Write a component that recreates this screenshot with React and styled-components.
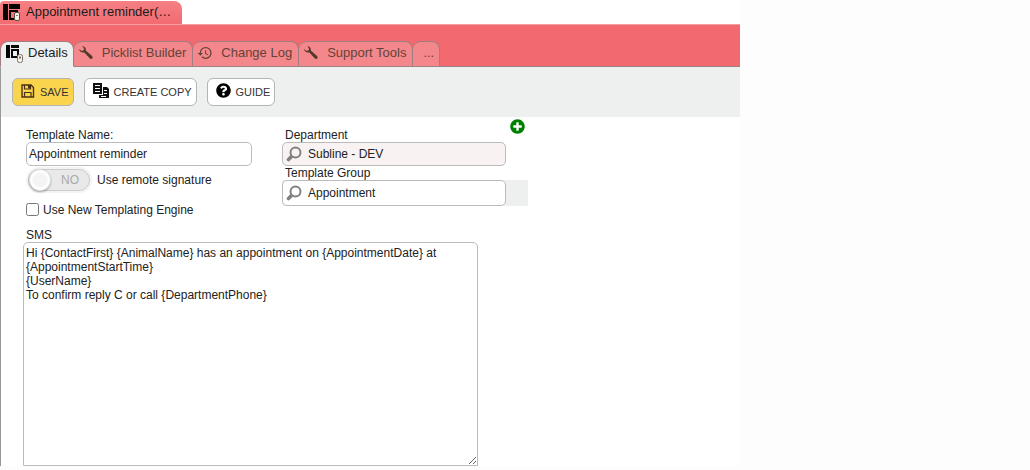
import { useState } from "react";
import styled, { createGlobalStyle } from "styled-components";
import { FaQuestionCircle, FaPlusCircle } from "react-icons/fa";
import { MdHistory } from "react-icons/md";

const GlobalStyle = createGlobalStyle`
  * {
    box-sizing: border-box;
  }
  body {
    margin: 0;
    background: #fdfdfd;
    color: #222;
    font: 12px/14px "Liberation Sans", Arial, sans-serif;
  }
  button, input, textarea {
    font: inherit;
    color: inherit;
  }
`;

const Window = styled.main`
  width: 100%;
  max-width: 740px;
  background: #fff;
`;
const TitleBar = styled.header`
  display: flex;
  height: 24px;
  padding-top: 1px;
`;
const WindowTab = styled.button`
  display: flex;
  align-items: center;
  gap: 4px;
  width: 182px;
  padding: 0 8px 2px 3px;
  border: none;
  border-radius: 4px 8px 0 0;
  background: linear-gradient(#f58084, #f26b71);
  font-size: 13px;
  line-height: 16px;
  color: #1b1b1b;
  white-space: nowrap;
`;
const TabBar = styled.nav`
  display: flex;
  padding-top: 16px;
  border-top: 1px solid #f59da1;
  background: #f26a70;
  box-shadow: inset 0 -1px #9c8284;
`;
const Tab = styled.button`
  display: flex;
  align-items: center;
  height: 26px;
  gap: ${({ $active }) => ($active ? "4px" : "8px")};
  padding: ${({ $active }) => ($active ? "0 5px 2px 5px" : "0 6px 2px 4px")};
  border: 1px solid #a07d80;
  border-left-width: ${({ $active }) => ($active ? "1px" : "0")};
  border-bottom-color: ${({ $active }) => ($active ? "#eef0ef" : "#9c8284")};
  border-radius: 8px 8px 0 0;
  background: ${({ $active }) => ($active ? "#eef0ef" : "#f4878b")};
  color: ${({ $active }) => ($active ? "#222" : "#634337")};
  font-size: 13px;
  line-height: 16px;
  white-space: nowrap;
`;
const MoreTab = styled(Tab)`
  padding: 0 5px 2px 10px;
`;
const Body = styled.div`
  border-left: 1px solid #999;
`;
const Toolbar = styled.div`
  display: flex;
  align-items: center;
  gap: 10px;
  height: 50px;
  padding: 0 11px;
  background: #eef0ef;
`;
const ToolButton = styled.button`
  display: flex;
  align-items: center;
  gap: 5px;
  height: 28px;
  padding: 0 4px 0 8px;
  border: 1px solid #b4b4b4;
  border-radius: 6px;
  background: ${({ $primary }) => ($primary ? "#fad44c" : "#fff")};
  color: #333;
  font-size: 11px;
  white-space: nowrap;

  svg {
    margin-bottom: 3px;
  }
`;
const Form = styled.form`
  padding: 11px 22px 0;
`;
const Columns = styled.div`
  display: grid;
  grid-template-columns: 226px 246px;
  gap: 30px;
  padding-left: 3px;
`;
const Column = styled.div`
  display: flex;
  flex-direction: column;
`;
const Label = styled.label`
  height: 14px;
  padding-left: ${({ $indent }) => ($indent ? "3px" : "0")};
`;
const TextInput = styled.input`
  width: 100%;
  height: 24px;
  padding: 0 2px;
  border: 1px solid #bbb;
  border-radius: 5px;
  background: #fff;
  outline: none;
`;
const LookupHead = styled.div`
  display: flex;
  justify-content: space-between;
  padding-right: 3px;
`;
const AddButton = styled.button`
  display: flex;
  width: 15px;
  height: 15px;
  margin: -9px 0 0;
  padding: 0;
  border: none;
  border-radius: 50%;
  background: #fff;
  color: #008000;
`;
const Lookup = styled.div`
  display: flex;
  align-items: center;
  gap: 6px;
  width: 224px;
  height: ${({ $filled }) => ($filled ? "24px" : "26px")};
  padding-left: 3px;
  border: 1px solid #bbb;
  border-radius: 5px;
  background: ${({ $filled }) => ($filled ? "#f9f2f2" : "#fff")};
`;
const LookupInput = styled.input`
  flex: 1;
  min-width: 0;
  padding: 0;
  border: none;
  background: none;
  outline: none;
`;
const LookupStrip = styled.div`
  background: #eef0ef;
`;
const SwitchRow = styled.div`
  display: flex;
  align-items: center;
  gap: 5px;
  padding-top: 1px;
`;
const SwitchFrame = styled.span`
  display: flex;
  padding: 2px;
  border-radius: 14px;
  background: #f3f3f3;
`;
const Switch = styled.button`
  display: flex;
  flex-direction: ${({ $on }) => ($on ? "row-reverse" : "row")};
  align-items: center;
  justify-content: space-between;
  width: 62px;
  height: 22px;
  padding: 0 ${({ $on }) => ($on ? "0 0 10px" : "10px 0 0")};
  border: 1px solid #ccc;
  border-radius: 11px;
  background: #e9e9e9;
  color: #aaa;
`;
const Knob = styled.span`
  width: 22px;
  height: 22px;
  border: 1px solid #ddd;
  border-radius: 50%;
  background: radial-gradient(#f4f4f4 45%, #fff 60%);
  box-shadow: 0 1px 2px rgba(0, 0, 0, 0.35);
`;
const CheckRow = styled.div`
  display: flex;
  align-items: center;
  gap: 4px;
  margin-top: 8px;

  label {
    padding-top: 2px;
  }
`;
const Checkbox = styled.input`
  width: 13px;
  height: 13px;
  margin: 0;
`;
const Message = styled.div`
  display: flex;
  flex-direction: column;
  margin-top: 11px;
`;
const MessageBox = styled.textarea`
  display: block;
  width: 455px;
  max-width: 100%;
  height: 224px;
  padding: 3px 2px;
  border: 1px solid #bbb;
  border-radius: 5px 5px 0 0;
  outline: none;
  resize: both;
`;

function TemplateIcon() {
  return (
    <svg width="19" height="20" viewBox="0 0 19 20" aria-hidden="true">
      <path fill="#050505" d="M0 2h5v16H0zM6 2h11v5H6z" />
      <path fill="none" stroke="#050505" strokeWidth="2" d="M7 9h7v8H7z" />
      <rect x="11.5" y="10.5" width="5" height="8" rx="1.5" fill="#f6f3e9" stroke="#554f48" />
      <path stroke="#8a7f70" d="M13 13.5h2" />
    </svg>
  );
}

function DetailsIcon() {
  return (
    <svg width="18" height="22" viewBox="0 0 18 22" aria-hidden="true">
      <path fill="#050505" d="M0 3h4v13H0zM5 3h8v3H5z" />
      <path fill="none" stroke="#050505" strokeWidth="2" d="M6 8h6v7H6z" />
      <rect x="11.5" y="12.5" width="5" height="8" rx="2" fill="#f6f3e9" stroke="#776f66" />
      <path stroke="#776f66" d="M13 15.5h2M14 14v3" />
    </svg>
  );
}

function WrenchIcon() {
  return (
    <svg width="16" height="16" viewBox="0 0 16 16" aria-hidden="true">
      <path
        fill="#54392c"
        d="M4.2 1.2C6.6 1.1 8.3 3 7.8 5.4L14.1 11C15.7 12.600 13.600 15 11.900 13.500L6.300 7.400C3.800 8.200 1.300 6.500 1.200 4L3.600 5.900 5.700 5.300 6 3.200Z"
      />
    </svg>
  );
}

function SaveIcon() {
  return (
    <svg width="14" height="14" viewBox="0 0 14 14" fill="none" stroke="#4a3215" aria-hidden="true">
      <path strokeWidth="1.4" d="M1 1h9L12.500 3.500V13H1z" />
      <path strokeWidth="1.2" d="M3.5 13V8.500h6.500V13M3.500 1v4h6V1" />
      <path fill="#4a3215" stroke="none" d="M7 1h2v3.500H7z" />
    </svg>
  );
}

function CopyIcon() {
  return (
    <svg width="16" height="15" viewBox="0 0 16 15" aria-hidden="true">
      <path fill="#111" d="M0 0h9v11H0z" />
      <path stroke="#fff" d="M2 2.500h5M2 5.500h5M2 8.500h5" />
      <path fill="#111" d="M10 4h4l2 2v9H6v-3h4z" />
      <path stroke="#fff" d="M11 7.500h3M11 10.500h3M8 13.500h5" />
    </svg>
  );
}

function LensIcon() {
  return (
    <svg width="16" height="16" viewBox="0 0 16 16" fill="none" stroke="#808080" aria-hidden="true">
      <circle cx="9.500" cy="6.500" r="5" strokeWidth="2" />
      <path strokeWidth="3.600" strokeLinecap="round" d="M5 11L2.500 13.500" />
    </svg>
  );
}

const message = `Hi {ContactFirst} {AnimalName} has an appointment on {AppointmentDate} at {AppointmentStartTime}
{UserName}
To confirm reply C or call {DepartmentPhone}`;

export default function App() {
  const [remote, setRemote] = useState(false);

  return (
    <>
      <GlobalStyle />
      <Window>
        <TitleBar>
          <WindowTab type="button">
            <TemplateIcon />
            Appointment reminder(…
          </WindowTab>
        </TitleBar>
        <TabBar>
          <Tab type="button" $active>
            <DetailsIcon />
            Details
          </Tab>
          <Tab type="button">
            <WrenchIcon />
            Picklist Builder
          </Tab>
          <Tab type="button">
            <MdHistory size={16} />
            Change Log
          </Tab>
          <Tab type="button">
            <WrenchIcon />
            Support Tools
          </Tab>
          <MoreTab type="button">...</MoreTab>
        </TabBar>
        <Body>
          <Toolbar>
            <ToolButton type="button" $primary>
              <SaveIcon />
              SAVE
            </ToolButton>
            <ToolButton type="button">
              <CopyIcon />
              CREATE COPY
            </ToolButton>
            <ToolButton type="button">
              <FaQuestionCircle size={15} color="#000" />
              GUIDE
            </ToolButton>
          </Toolbar>
          <Form onSubmit={(e) => e.preventDefault()}>
            <Columns>
              <Column>
                <Label htmlFor="name">Template Name:</Label>
                <TextInput id="name" defaultValue="Appointment reminder" />
                <SwitchRow>
                  <SwitchFrame>
                    <Switch
                      id="remote"
                      type="button"
                      role="switch"
                      aria-checked={remote}
                      $on={remote}
                      onClick={() => setRemote((prev) => !prev)}
                    >
                      <Knob />
                      {remote ? "YES" : "NO"}
                    </Switch>
                  </SwitchFrame>
                  <Label htmlFor="remote">Use remote signature</Label>
                </SwitchRow>
                <CheckRow>
                  <Checkbox id="engine" type="checkbox" />
                  <label htmlFor="engine">Use New Templating Engine</label>
                </CheckRow>
              </Column>
              <Column>
                <LookupHead>
                  <Label htmlFor="department" $indent>Department</Label>
                  <AddButton type="button" aria-label="Add department">
                    <FaPlusCircle size={15} />
                  </AddButton>
                </LookupHead>
                <Lookup $filled>
                  <LensIcon />
                  <LookupInput id="department" defaultValue="Subline - DEV" />
                </Lookup>
                <Label htmlFor="group" $indent>Template Group</Label>
                <LookupStrip>
                  <Lookup>
                    <LensIcon />
                    <LookupInput id="group" defaultValue="Appointment" />
                  </Lookup>
                </LookupStrip>
              </Column>
            </Columns>
            <Message>
              <Label htmlFor="sms" $indent>SMS</Label>
              <MessageBox id="sms" defaultValue={message} />
            </Message>
          </Form>
        </Body>
      </Window>
    </>
  );
}
